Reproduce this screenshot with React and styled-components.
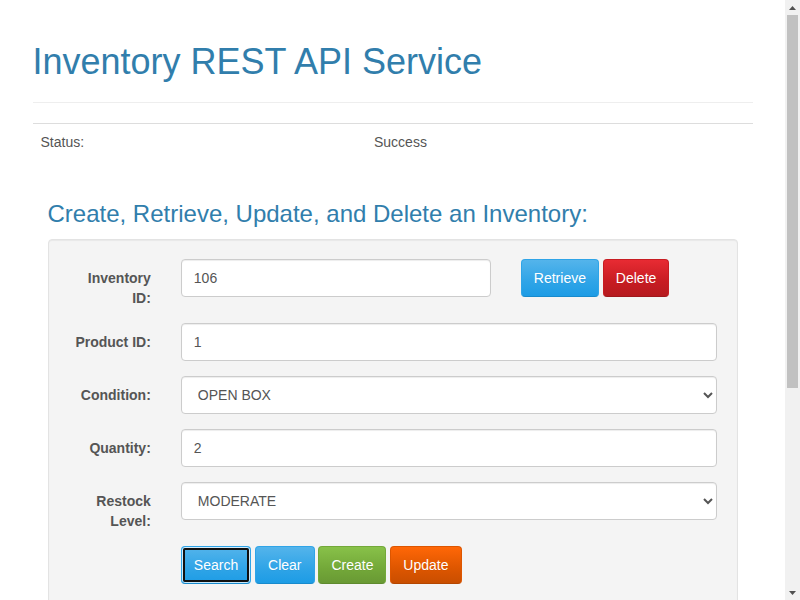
import React from "react";
import styled, { createGlobalStyle, css } from "styled-components";

const GlobalStyle = createGlobalStyle`
  *, *::before, *::after { box-sizing: border-box; }
  html, body { margin: 0; padding: 0; }
  body {
    font-family: "Liberation Sans", Helvetica, Arial, sans-serif;
    font-size: 14px;
    line-height: 1.428571;
    color: #555555;
    background: #ffffff;
    overflow: hidden;
  }
`;

const Shell = styled.div`
  display: flex;
  height: 100vh;
`;

const Viewport = styled.div`
  flex: 1;
  min-width: 0;
  overflow: hidden;
`;

const ScrollBar = styled.div`
  flex: none;
  width: 15px;
  display: flex;
  flex-direction: column;
  background: #f1f1f1;
`;

const ArrowButton = styled.div`
  flex: none;
  height: 15px;
  display: flex;
  align-items: center;
  justify-content: center;
`;

const Track = styled.div`
  flex: 1;
  padding: 0 2px;
`;

const Thumb = styled.div`
  background: #c1c1c1;
`;

const Container = styled.div`
  width: 750px;
  margin: 0 auto;
  padding: 0 15px 40px;
`;

const PageHeader = styled.div`
  margin: 40px 0 20px;
  padding-bottom: 9px;
  border-bottom: 1px solid #eeeeee;
`;

const Title = styled.h1`
  margin: 0 0 10px;
  font-size: 36px;
  line-height: 1.2;
  font-weight: 500;
  color: #317eac;
`;

const StatusRow = styled.div`
  display: grid;
  grid-template-columns: 333.5px 1fr;
  border-top: 1px solid #dddddd;
  margin-bottom: 20px;
`;

const Cell = styled.div`
  padding: 8px;
  line-height: 20px;
`;

const Section = styled.div`
  display: flow-root;
  padding: 0 15px;
`;

const SectionTitle = styled.h3`
  margin: 20px 0 10px;
  font-size: 24px;
  line-height: 1.2;
  font-weight: 500;
  color: #317eac;
`;

const Well = styled.div`
  padding: 19px;
  margin-bottom: 20px;
  background: #f4f4f4;
  border: 1px solid #e3e3e3;
  border-radius: 4px;
  box-shadow: inset 0 1px 1px rgba(0, 0, 0, 0.05);
`;

const FormGroup = styled.div`
  display: flex;
  margin: 0 -15px 15px;
`;

const Label = styled.label`
  width: 16.666667%;
  padding: 9px 15px 0;
  text-align: right;
  font-weight: bold;
  line-height: 20px;
`;

const Field = styled.div`
  width: ${(p) => (p.$cols / 12) * 100}%;
  margin-left: ${(p) => ((p.$offset || 0) / 12) * 100}%;
  padding: 0 15px;
`;

const controlStyles = css`
  display: block;
  width: 100%;
  height: 38px;
  padding: 8px 12px;
  font-family: inherit;
  font-size: 14px;
  line-height: 1.428571;
  color: #555555;
  background-color: #ffffff;
  border: 1px solid #cccccc;
  border-radius: 4px;
  box-shadow: inset 0 1px 1px rgba(0, 0, 0, 0.075);
`;

const Input = styled.input`
  ${controlStyles}
`;

const Select = styled.select`
  ${controlStyles}
`;

const variants = {
  primary: { grad: "#54b4eb, #2fa4e7 60%, #1d9ce5", border: "#2fa4e7", bottom: "#178acc" },
  danger: { grad: "#e72b33, #c71c22 60%, #b61a1f", border: "#c71c22", bottom: "#9f171b" },
  success: { grad: "#88c149, #73a839 60%, #699934", border: "#73a839", bottom: "#5e8a2e" },
  warning: { grad: "#ff6707, #dd5600 60%, #c94e00", border: "#dd5600", bottom: "#b44600" },
};

const Button = styled.button`
  display: inline-block;
  vertical-align: middle;
  padding: 8px 12px;
  font-family: inherit;
  font-size: 14px;
  line-height: 20px;
  color: #ffffff;
  border-radius: 4px;
  border: 1px solid ${(p) => variants[p.$variant].border};
  border-bottom-color: ${(p) => variants[p.$variant].bottom};
  background-image: linear-gradient(${(p) => variants[p.$variant].grad});
  text-shadow: 0 1px 0 rgba(0, 0, 0, 0.05);
  cursor: pointer;
  ${(p) =>
    p.$focused &&
    css`
      outline: 2px solid #101010;
      outline-offset: -4px;
      box-shadow: inset 0 0 0 1px rgba(255, 255, 255, 0.75);
    `}
`;

const ArrowIcon = ({ down }) => (
  <svg width="7" height="4" viewBox="0 0 7 4" aria-hidden="true">
    <path d={down ? "M0 0 H7 L3.5 4 Z" : "M0 4 H7 L3.5 0 Z"} fill="#505050" />
  </svg>
);

export default function App() {
  return (
    <>
      <GlobalStyle />
      <Shell>
        <Viewport>
          <Container>
            <PageHeader>
              <Title>Inventory REST API Service</Title>
            </PageHeader>

            <StatusRow>
              <Cell>Status:</Cell>
              <Cell>Success</Cell>
            </StatusRow>

            <Section>
              <SectionTitle>Create, Retrieve, Update, and Delete an Inventory:</SectionTitle>
              <Well>
                <FormGroup>
                  <Label htmlFor="inventory_id">Inventory ID:</Label>
                  <Field $cols={6}>
                    <Input id="inventory_id" type="text" defaultValue="106" />
                  </Field>
                  <Field $cols={4}>
                    <Button $variant="primary">Retrieve</Button>{" "}
                    <Button $variant="danger">Delete</Button>
                  </Field>
                </FormGroup>

                <FormGroup>
                  <Label htmlFor="product_id">Product ID:</Label>
                  <Field $cols={10}>
                    <Input id="product_id" type="text" defaultValue="1" />
                  </Field>
                </FormGroup>

                <FormGroup>
                  <Label htmlFor="condition">Condition:</Label>
                  <Field $cols={10}>
                    <Select id="condition" defaultValue="OPEN_BOX">
                      <option value="NEW">NEW</option>
                      <option value="OPEN_BOX">OPEN BOX</option>
                      <option value="USED">USED</option>
                    </Select>
                  </Field>
                </FormGroup>

                <FormGroup>
                  <Label htmlFor="quantity">Quantity:</Label>
                  <Field $cols={10}>
                    <Input id="quantity" type="text" defaultValue="2" />
                  </Field>
                </FormGroup>

                <FormGroup>
                  <Label htmlFor="restock">Restock Level:</Label>
                  <Field $cols={10}>
                    <Select id="restock" defaultValue="MODERATE">
                      <option value="EMPTY">EMPTY</option>
                      <option value="LOW">LOW</option>
                      <option value="MODERATE">MODERATE</option>
                      <option value="PLENTY">PLENTY</option>
                    </Select>
                  </Field>
                </FormGroup>

                <FormGroup>
                  <Field $cols={10} $offset={2}>
                    <Button $variant="primary" $focused>Search</Button>{" "}
                    <Button $variant="primary">Clear</Button>{" "}
                    <Button $variant="success">Create</Button>{" "}
                    <Button $variant="warning">Update</Button>
                  </Field>
                </FormGroup>
              </Well>
            </Section>
          </Container>
        </Viewport>
        <ScrollBar aria-hidden="true">
          <ArrowButton>
            <ArrowIcon />
          </ArrowButton>
          <Track>
            <Thumb style={{ height: 373 }} />
          </Track>
          <ArrowButton>
            <ArrowIcon down />
          </ArrowButton>
        </ScrollBar>
      </Shell>
    </>
  );
}
